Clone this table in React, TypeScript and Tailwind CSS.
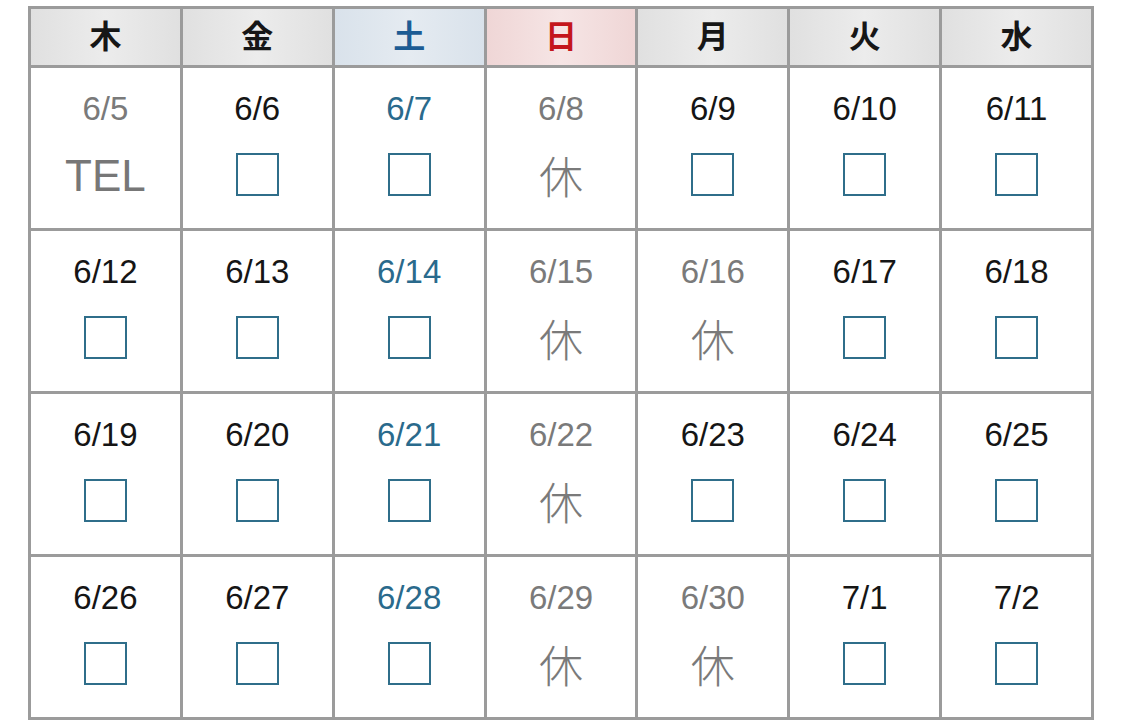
import React from "react";

type Cell = { d: string; c: "k" | "g" | "b"; m: "box" | "休" | "TEL" };

const rows: Cell[][] = [
  [
    { d: "6/5", c: "g", m: "TEL" },
    { d: "6/6", c: "k", m: "box" },
    { d: "6/7", c: "b", m: "box" },
    { d: "6/8", c: "g", m: "休" },
    { d: "6/9", c: "k", m: "box" },
    { d: "6/10", c: "k", m: "box" },
    { d: "6/11", c: "k", m: "box" },
  ],
  [
    { d: "6/12", c: "k", m: "box" },
    { d: "6/13", c: "k", m: "box" },
    { d: "6/14", c: "b", m: "box" },
    { d: "6/15", c: "g", m: "休" },
    { d: "6/16", c: "g", m: "休" },
    { d: "6/17", c: "k", m: "box" },
    { d: "6/18", c: "k", m: "box" },
  ],
  [
    { d: "6/19", c: "k", m: "box" },
    { d: "6/20", c: "k", m: "box" },
    { d: "6/21", c: "b", m: "box" },
    { d: "6/22", c: "g", m: "休" },
    { d: "6/23", c: "k", m: "box" },
    { d: "6/24", c: "k", m: "box" },
    { d: "6/25", c: "k", m: "box" },
  ],
  [
    { d: "6/26", c: "k", m: "box" },
    { d: "6/27", c: "k", m: "box" },
    { d: "6/28", c: "b", m: "box" },
    { d: "6/29", c: "g", m: "休" },
    { d: "6/30", c: "g", m: "休" },
    { d: "7/1", c: "k", m: "box" },
    { d: "7/2", c: "k", m: "box" },
  ],
];

const colorCls = { k: "text-[#151515]", g: "text-[#7a7a7a]", b: "text-[#2a6a8c]" };

function Header({ label, kind }: { label: string; kind: "n" | "sat" | "sun" }) {
  const bg =
    kind === "sat"
      ? "bg-[linear-gradient(90deg,#d9e2eb,#e5ebf1_50%,#d9e2eb)]"
      : kind === "sun"
      ? "bg-[linear-gradient(90deg,#efd6d6,#f6e5e5_50%,#efd6d6)]"
      : "bg-[linear-gradient(90deg,#e0e0e0,#ececec_50%,#e0e0e0)]";
  const color = kind === "sat" ? "text-[#1d5c94]" : kind === "sun" ? "text-[#c4161c]" : "text-[#161616]";
  return (
    <div className={`${bg} ${color} h-[56px] flex items-center justify-center font-bold text-[32px] leading-none`}>
      <span className="mt-[-1px]">{label}</span>
    </div>
  );
}

function DayCell({ cell }: { cell: Cell }) {
  return (
    <div className="bg-white h-[160px] flex flex-col items-center">
      <div className={`${colorCls[cell.c]} text-[33px] leading-none mt-[24px] h-[33px]`}>{cell.d}</div>
      <div className="mt-[22px] h-[50px] flex items-center justify-center">
        {cell.m === "box" ? (
          <div className="w-[43px] h-[43px] border-[2.5px] border-[#2f6e8a] mt-[4px]" />
        ) : cell.m === "TEL" ? (
          <span className="text-[44px] leading-none text-[#777777] mt-[8px]">TEL</span>
        ) : (
          <span
            className="text-[44px] leading-none text-[#7a7a7a] mt-[5px]"
            style={{ fontFamily: '"Noto Sans CJK JP", sans-serif', fontWeight: 300 }}
          >
            休
          </span>
        )}
      </div>
    </div>
  );
}

export default function App() {
  const heads: { l: string; k: "n" | "sat" | "sun" }[] = [
    { l: "木", k: "n" },
    { l: "金", k: "n" },
    { l: "土", k: "sat" },
    { l: "日", k: "sun" },
    { l: "月", k: "n" },
    { l: "火", k: "n" },
    { l: "水", k: "n" },
  ];
  return (
    <div
      className="w-[1123px] h-[720px] bg-white overflow-hidden pl-[28px] pt-[6px]"
      style={{ fontFamily: '"Liberation Sans", "Noto Sans CJK JP", sans-serif' }}
    >
      <div className="w-[1066px] grid grid-cols-7 gap-[3px] p-[3px] bg-[#9b9b9b]">
        {heads.map((h) => (
          <Header key={h.l} label={h.l} kind={h.k} />
        ))}
        {rows.flat().map((c) => (
          <DayCell key={c.d} cell={c} />
        ))}
      </div>
    </div>
  );
}
